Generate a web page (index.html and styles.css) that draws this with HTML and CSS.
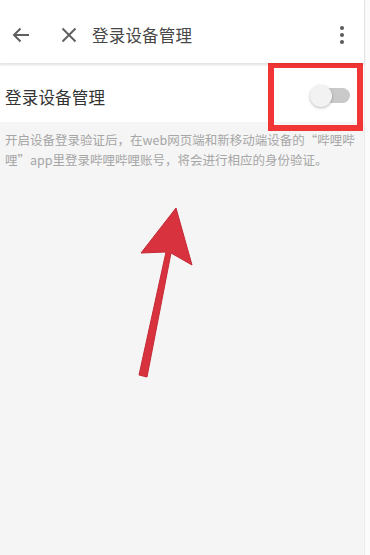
FILE: index.html
```html
<!DOCTYPE html>
<html lang="zh">
<head>
<meta charset="utf-8">
<link rel="stylesheet" href="styles.css">
</head>
<body>
<div class="screen">
  <header class="topbar">
    <span class="icon back">
      <svg width="20" height="20" viewBox="0 0 20 20"><path d="M18 10H3M9.5 3.5L3 10l6.5 6.5" fill="none" stroke="#5f5f5f" stroke-width="2"/></svg>
    </span>
    <span class="icon close">
      <svg width="16" height="16" viewBox="0 0 16 16"><path d="M1.5 1.5l13 13M14.5 1.5l-13 13" fill="none" stroke="#5f5f5f" stroke-width="1.9"/></svg>
    </span>
    <span class="title">登录设备管理</span>
    <span class="more"><i></i><i></i><i></i></span>
  </header>
  <section class="row">
    <span class="row-label">登录设备管理</span>
    <span class="switch"><span class="track"></span><span class="knob"></span></span>
  </section>
  <p class="desc">开启设备登录验证后，在web网页端和新移动端设备的“哔哩哔<br>哩”app里登录哔哩哔哩账号，将会进行相应的身份验证。</p>
  <div class="highlight"></div>
  <svg class="arrow" width="370" height="555" viewBox="0 0 370 555">
    <path d="M143 376 L139 375 L166 252 L141 253 L176 208 L192 265 L171 253 L147 377 Z" fill="#d8323f" stroke="#c42a36" stroke-width="1" stroke-linejoin="round"/>
  </svg>
</div>
</body>
</html>
```
FILE: styles.css
```css
html, body {
  margin: 0;
  padding: 0;
}
body {
  width: 370px;
  height: 555px;
  overflow: hidden;
  background: #fbfbfb;
  font-family: "Noto Sans CJK SC", "Noto Sans", sans-serif;
}
.screen {
  position: relative;
  width: 364px;
  height: 555px;
  background: #f5f5f5;
  border-right: 1px solid #ececec;
}
.topbar {
  height: 63px;
  background: #ffffff;
  display: flex;
  align-items: center;
  padding-top: 6px;
  box-sizing: border-box;
  box-shadow: 0 1px 3px rgba(0,0,0,0.10);
  position: relative;
  z-index: 1;
}
.icon {
  display: flex;
  align-items: center;
  justify-content: center;
}
.back {
  margin-left: 11px;
  width: 20px;
}
.close {
  margin-left: 30px;
  width: 16px;
}
.title {
  margin-left: 15px;
  font-size: 16.5px;
  color: #474747;
  flex: 1;
  letter-spacing: 0.2px;
}
.more {
  display: flex;
  flex-direction: column;
  gap: 3px;
  margin-right: 20px;
}
.more i {
  width: 4px;
  height: 4px;
  border-radius: 50%;
  background: #5a5a5a;
}
.row {
  margin-top: 3px;
  height: 56px;
  background: #ffffff;
  display: flex;
  align-items: center;
  justify-content: space-between;
  padding: 0 12px 0 5px;
}
.row-label {
  font-size: 16.5px;
  color: #333333;
  letter-spacing: 0.2px;
  padding-top: 5px;
}
.switch {
  position: relative;
  width: 42px;
  height: 24px;
  display: flex;
  align-items: center;
  margin-top: 3px;
}
.track {
  margin-left: 8px;
  width: 32px;
  height: 15px;
  border-radius: 8px;
  background: #c9c9c9;
}
.knob {
  position: absolute;
  left: 0;
  top: 1px;
  width: 22px;
  height: 22px;
  border-radius: 50%;
  background: #f2f2f2;
  box-shadow: 0 1px 3px rgba(0,0,0,0.28);
}
.desc {
  margin: 8px 0 0 0;
  padding: 0 5px;
  font-size: 12.5px;
  line-height: 20px;
  color: #a6a6a6;
  white-space: nowrap;
}
.highlight {
  position: absolute;
  left: 268px;
  top: 62px;
  width: 83px;
  height: 57px;
  border: 6px solid #f23535;
}
.arrow {
  position: absolute;
  left: 0;
  top: 0;
}
```
